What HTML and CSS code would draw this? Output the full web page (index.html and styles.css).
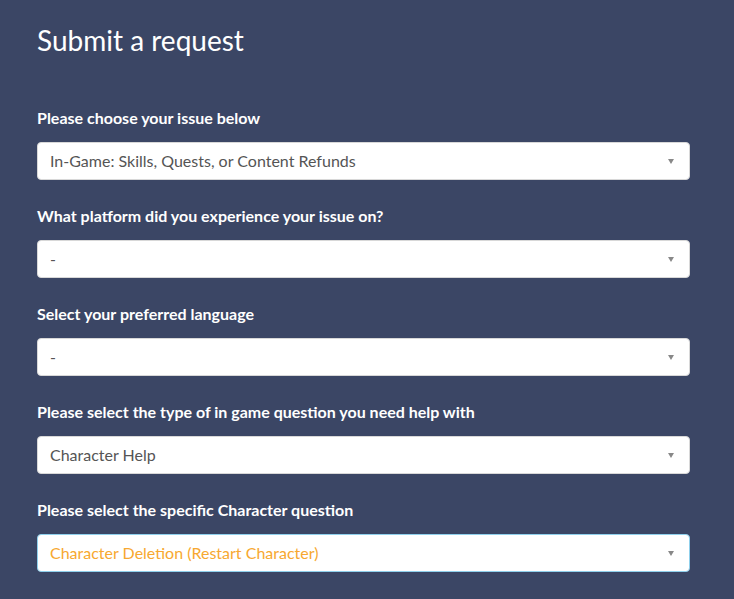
FILE: index.html
```html
<!DOCTYPE html>
<html lang="en">
<head>
<meta charset="utf-8">
<title>Submit a request</title>
<link rel="stylesheet" href="styles.css">
</head>
<body>
<main class="page">
  <h1 class="title">Submit a request</h1>
  <form class="form">
    <div class="field">
      <label class="label">Please choose your issue below</label>
      <div class="select"><span class="value">In-Game: Skills, Quests, or Content Refunds</span><span class="arrow"></span></div>
    </div>
    <div class="field">
      <label class="label">What platform did you experience your issue on?</label>
      <div class="select"><span class="value">-</span><span class="arrow"></span></div>
    </div>
    <div class="field">
      <label class="label">Select your preferred language</label>
      <div class="select"><span class="value">-</span><span class="arrow"></span></div>
    </div>
    <div class="field">
      <label class="label">Please select the type of in game question you need help with</label>
      <div class="select"><span class="value">Character Help</span><span class="arrow"></span></div>
    </div>
    <div class="field">
      <label class="label">Please select the specific Character question</label>
      <div class="select select-focus"><span class="value value-accent">Character Deletion (Restart Character)</span><span class="arrow"></span></div>
    </div>
  </form>
</main>
</body>
</html>
```
FILE: styles.css
```css
html, body {
  margin: 0;
  padding: 0;
  background: #3b4665;
}
body {
  font-family: Lato, "Open Sans", "Liberation Sans", sans-serif;
  color: #fff;
}
.page {
  width: 653px;
  padding: 22px 0 0 37px;
}
.title {
  margin: 0;
  font-size: 28px;
  font-weight: 400;
  line-height: 36px;
  color: #fff;
}
.form {
  display: flex;
  flex-direction: column;
  gap: 26px;
  margin-top: 50px;
}
.field {
  display: flex;
  flex-direction: column;
  gap: 14px;
}
.label {
  font-size: 16px;
  font-weight: 700;
  line-height: 20px;
  color: #fff;
}
.select {
  box-sizing: border-box;
  height: 38px;
  background: #fff;
  border: 1px solid #d8d8d8;
  border-radius: 4px;
  display: flex;
  align-items: center;
  justify-content: space-between;
  padding: 0 15px 2px 12px;
}
.select-focus {
  border-color: #8fd0ec;
}
.value {
  font-size: 16px;
  color: #555;
}
.value-accent {
  color: #f7a830;
}
.arrow {
  width: 0;
  height: 0;
  margin-top: 2px;
  border-left: 3px solid transparent;
  border-right: 3px solid transparent;
  border-top: 5px solid #888;
}
```
